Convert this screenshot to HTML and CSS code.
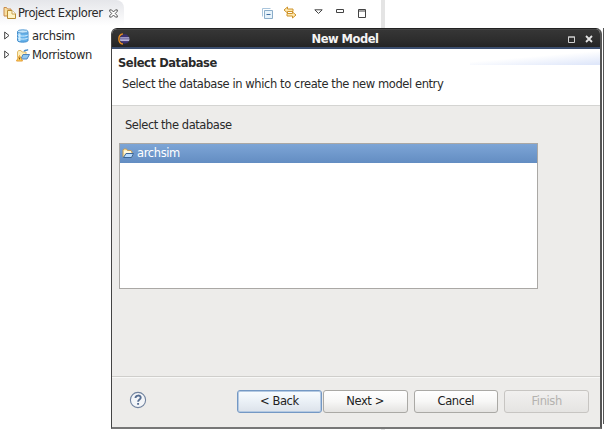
FILE: index.html
```html
<!DOCTYPE html>
<html lang="en">
<head>
<meta charset="utf-8">
<title>New Model</title>
<link rel="stylesheet" href="styles.css">
</head>
<body>
<main class="workbench">
  <section class="explorer">
    <header class="tabbar">
      <div class="tab">
        <svg class="tab-icon" width="14" height="14" viewBox="0 0 14 14"><path d="M1 9.500V1.500h2.500l1 1.500H8v7H1z" fill="#f8dfa0" stroke="#c98b4b"/><path d="M4.500 12.500V4.500H9l3.500 3.500v4.500z" fill="#fff3c5" stroke="#b88b32"/><path d="M9 4.500V8h3.500" fill="#fff" stroke="#c8a14e"/></svg>
        <span class="tab-title">Project Explorer</span>
        <svg class="tab-close" width="9" height="9" viewBox="0 0 10 10"><path d="M.8 1h2L5 3.300 7.200 1h2v1.500L7 5l2.200 2.500V9h-2L5 6.700 2.800 9h-2V7.500L3 5 .8 2.500z" fill="#fff" stroke="#444"/></svg>
      </div>
      <div class="tools">
        <svg width="12" height="12" viewBox="0 0 12 12"><path d="M.5 8.500v-8h8" fill="none" stroke="#a9c5dc"/><path d="M2.500 2.500h8v8h-8z" fill="#e7f3fb" stroke="#8badc9"/><path d="M4.500 6.500h4" stroke="#416d9e"/></svg>
        <svg class="link" width="14" height="13" viewBox="0 0 14 13"><path d="M1 4l3.500-3v2H10v2.500H4.500V7zM13 9L9.500 12v-2H4V7.500h5.500V6z" fill="#ffe9b0" stroke="#ce942c"/></svg>
        <svg class="menu" width="9" height="6" viewBox="0 0 9 6"><path d="M.8.800h7.400L4.500 4.500z" fill="#fff" stroke="#444"/></svg>
        <svg class="min" width="9" height="5" viewBox="0 0 9 5"><path d="M.5.500h7v3h-7z" fill="#fff" stroke="#444"/></svg>
        <svg class="max" width="9" height="9" viewBox="0 0 9 9"><path d="M.5.500h7v8h-7zM.5 2h7" fill="#fff" stroke="#444"/></svg>
      </div>
    </header>
    <ul class="tree">
      <li>
        <svg class="arrow" width="6" height="9" viewBox="0 0 6 9"><path d="M.7 1v7L5 4.500z" fill="#fff" stroke="#444"/></svg>
        <svg class="node" width="14" height="14" viewBox="0 0 14 14"><path d="M1.500 2.500v9c0 2.200 10.500 2.200 10.500 0v-9z" fill="#65b2ea" stroke="#438dcc"/><path d="M3.500 4v8" stroke="#c9ebff" stroke-width="2"/><ellipse cx="6.750" cy="2.500" rx="5.250" ry="1.700" fill="#c6e6fa" stroke="#559bd4"/><path d="M1.500 5.800c1 1.700 9.500 1.700 10.500 0M1.500 8.800c1 1.700 9.500 1.700 10.500 0" fill="none" stroke="#d6efff"/></svg>
        <span class="label">archsim</span>
      </li>
      <li>
        <svg class="arrow" width="6" height="9" viewBox="0 0 6 9"><path d="M.7 1v7L5 4.500z" fill="#fff" stroke="#444"/></svg>
        <svg class="node" width="14" height="14" viewBox="0 0 14 14"><path d="M1.500 9V4l1-1.500H5L6 4h4v6H2z" fill="#fff0bd" stroke="#e0bb69"/><path d="M5 11l2-4.500h6.500L11 11z" fill="#91c7ef" stroke="#4c83bb"/><path d="M8 3.500c1-2 2.500-.5 4-2" fill="none" stroke="#468bcb" stroke-width="1.500"/><path d="M3.500 7.500l3 5.500h-6z" fill="#ffd45b" stroke="#e39b34"/><path d="M3.500 9.500v2" stroke="#865a18"/></svg>
        <span class="label">Morristown</span>
      </li>
    </ul>
  </section>
  <div class="sash"></div>
  <div class="editor"></div>
</main>

<section class="dialog">
  <header class="titlebar">
    <svg class="logo" width="12" height="12" viewBox="0 0 12 12"><path d="M5 1C-.5 1.500-.5 10.500 5 11" fill="none" stroke="#e58b25" stroke-width="1.500"/><circle cx="6.700" cy="6" r="4.700" fill="#39306f"/><path d="M2.200 4.800h9M2 6.200h9.500M2.200 7.600h9" stroke="#c5c2e5"/></svg>
    <h1><span class="title">New Model</span></h1>
    <svg class="win-max" width="7" height="7" viewBox="0 0 7 7"><path d="M.5 1h6v5.500h-6zM0 1h7" fill="none" stroke="#d0d0d0"/></svg>
    <svg class="win-close" width="8" height="8" viewBox="0 0 8 8"><path d="M1 1l6 6M7 1L1 7" stroke="#e2e2e2" stroke-width="1.800"/></svg>
  </header>
  <div class="banner">
    <h2>Select Database</h2>
    <p>Select the database in which to create the new model entry</p>
  </div>
  <div class="content">
    <label>Select the database</label>
    <div class="list">
      <div class="row">
        <svg width="12" height="11" viewBox="0 0 12 11"><path d="M1 9V2l1-1h2.500l1 1.500H9L10 4v5z" fill="#fff1bd" stroke="#c79d57"/><path d="M1.500 9.500L4 5.500h7.500L9.500 9.500z" fill="#b9dcff" stroke="#3c6697"/><path d="M2 4h7" stroke="#fff"/></svg>
        <span>archsim</span>
      </div>
    </div>
  </div>
  <footer class="actions">
    <svg class="help" width="18" height="18" viewBox="0 0 18 18"><circle cx="9" cy="9" r="7.600" fill="#f3f5f8" stroke="#71839f" stroke-width="1.100"/><path d="M6.500 7c0-3.200 5.300-3.200 5.200-.2C11.700 8.700 9.100 8.500 9.100 10.800M9.100 12v1.800" fill="none" stroke="#566d91" stroke-width="1.900"/></svg>
    <button class="back">&lt; Back</button>
    <button class="next">Next &gt;</button>
    <button class="cancel">Cancel</button>
    <button class="finish" disabled>Finish</button>
  </footer>
</section>
<div class="screen-edge"></div>
</body>
</html>
```
FILE: styles.css
```css
* { box-sizing: border-box; }
body {
  margin: 0;
  width: 606px;
  height: 430px;
  overflow: hidden;
  position: relative;
  background: #fff;
  color: #2a2a2a;
  font: 11.5px/16px "DejaVu Sans", sans-serif;
}
svg { display: block; flex: none; }
h1, h2, p, ul { margin: 0; padding: 0; }
.workbench { display: flex; height: 430px; }
.explorer { width: 381px; }
.tabbar { display: flex; height: 26px; }
.tab {
  display: flex;
  align-items: center;
  width: 124px;
  padding-left: 3px;
  border-top-right-radius: 8px;
  background: linear-gradient(#e5e6ea, #fff);
}
.tab-title { width: 88px; margin-left: 1px; white-space: nowrap; letter-spacing: -0.4px; }
.tab-close { margin-left: 3px; }
.tools { display: flex; align-items: flex-start; padding: 8px 0 0 138px; }
.link { margin: -2px 0 0 9px; }
.menu { margin: 1px 0 0 17px; }
.min { margin: 1px 0 0 13px; }
.max { margin: 1px 0 0 13px; }
.tree { list-style: none; padding: 0 0 0 4px; }
.tree li { display: flex; align-items: center; height: 19px; }
.node { margin-left: 6px; }
.label { margin-left: 2px; letter-spacing: -0.37px; }
.sash { width: 4px; background: #e4e4e4; }
.editor { flex: 1; background: #fff; }
.dialog {
  position: absolute;
  left: 111px;
  top: 28px;
  display: flex;
  flex-direction: column;
  width: 491px;
  height: 401px;
  border: solid #333;
  border-width: 1px 2px 2px 1px;
  border-color: #222 #555 #777 #444;
  border-radius: 6px 6px 0 0;
  background: #edecea;
  overflow: hidden;
}
.titlebar {
  display: flex;
  align-items: center;
  height: 20px;
  padding: 0 7px 0 6px;
  color: #f4f4f4;
  background: linear-gradient(#555 0, #363636 1px, #2c2c2c 60%, #242424 89%, #3c4f70 90%);
}
.titlebar h1 { flex: 1; padding-right: 8px; font-size: 11.5px; line-height: 18px; text-align: center; }
.title { letter-spacing: -0.5px; }
.win-max { margin-right: 10px; }
.banner {
  height: 57px;
  padding: 6px;
  border-bottom: 1px solid #d4d4d2;
  background: linear-gradient(175deg, #fff 43%, #dfe7fa 95%) right 2px / 130px 14px no-repeat, #fff;
}
.banner h2 { font-size: 11.5px; line-height: 16px; letter-spacing: -0.43px; }
.banner p { padding: 5px 0 0 4px; letter-spacing: -0.41px; white-space: nowrap; }
.content { height: 270px; padding: 11px 0 0 7px; }
.content label { display: block; padding-left: 6px; letter-spacing: -0.44px; }
.list {
  width: 419px;
  height: 146px;
  margin-top: 10px;
  border: 1px solid #aaa8a5;
  background: #fff;
}
.row {
  display: flex;
  align-items: center;
  gap: 3px;
  height: 19px;
  padding: 0 0 1px 2px;
  color: #fff;
  letter-spacing: -0.37px;
  background: linear-gradient(#7da5d6, #638dc2);
}
.actions {
  display: flex;
  flex: 1;
  padding: 13px 11px 0 17px;
  border-top: 1px solid #cfcecb;
  box-shadow: inset 0 1px #f8f8f7;
}
.help { margin-top: 1px; }
button {
  width: 85px;
  height: 23px;
  margin: 0 0 0 16px;
  padding: 0 0 1px;
  border: 1px solid #aaa9a5;
  border-radius: 3px;
  color: #222;
  font: inherit;
  letter-spacing: -0.4px;
  background: linear-gradient(#fff, #f7f7f6 50%, #e4e3e1);
}
.back { margin-left: 90px; border-color: #7498c4; box-shadow: inset 0 0 0 1px #b4c9e2; background: linear-gradient(#f9fcff, #eaf0f6 50%, #dce2ea); }
.next { margin-left: 1px; }
.cancel { margin-left: 6px; }
.finish { margin-left: 6px; color: #b4b2af; border-color: #c7c5c2; background: linear-gradient(#f1f0ef, #e5e4e2); }
.screen-edge {
  position: absolute;
  left: 603px;
  top: 28px;
  width: 1px;
  height: 396px;
  background: #555;
}
```
